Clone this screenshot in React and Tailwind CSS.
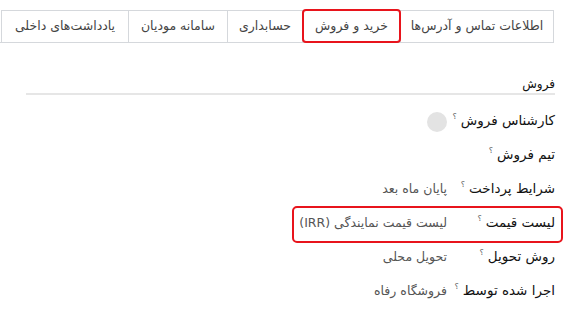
import React from "react";

const tabs = [
  { label: "اطلاعات تماس و آدرس‌ها", w: "w-[154px]" },
  { label: "خرید و فروش", w: "w-[98px]", active: true },
  { label: "حسابداری", w: "w-[75px]" },
  { label: "سامانه مودیان", w: "w-[99px]" },
  { label: "یادداشت‌های داخلی", w: "w-[127px]" },
];

const rows = [
  { label: "کارشناس فروش", avatar: true },
  { label: "تیم فروش" },
  { label: "شرایط پرداخت", value: "پایان ماه بعد" },
  { label: "لیست قیمت", value: "لیست قیمت نمایندگی (IRR)", boxed: true },
  { label: "روش تحویل", value: "تحویل محلی" },
  { label: "اجرا شده توسط", value: "فروشگاه رفاه" },
];

export default function App() {
  return (
    <div
      dir="rtl"
      className="w-[578px] h-[326px] bg-white overflow-hidden"
      style={{ fontFamily: '"DejaVu Sans", "Noto Sans", sans-serif' }}
    >
      <div className="pt-[10px] pr-[24px] flex">
        <div className="flex h-[33px] border-b border-[#d5d8dc] w-full">
          {tabs.map((t, i) => (
            <div
              key={i}
              className={`${t.w} shrink-0 relative h-full flex items-center justify-center text-[12.5px] text-[#444] border-t border-l border-[#d5d8dc] ${i === 0 ? "border-r" : ""} ${t.active ? "bg-white" : ""}`}
            >
              {t.label}
              {t.active && (
                <div className="absolute -top-[2px] -bottom-[1px] -left-[1px] -right-[1px] border-2 border-[#e8141c] rounded-[4px]" />
              )}
            </div>
          ))}
          <div className="flex-1" />
        </div>
      </div>

      <div className="pr-[23px] pl-[26px] pt-[35px]">
        <div className="h-[12px] flex items-end text-[12px] text-[#111] leading-none">
          فروش
        </div>
        <div className="mt-[3px] border-b-2 border-[#e6e6e6]" />
        <div className="mt-[9px] flex flex-col">
          {rows.map((r, i) => (
            <div key={i} className="relative h-[34px] flex items-center">
              <div className="w-[100px] shrink-0 text-[13.5px] text-[#111] whitespace-nowrap leading-none">
                <span>{r.label}</span>
                <span className="relative -top-[6px] text-[8px] text-[#666] mr-[4px]">؟</span>
              </div>
              <div className="mr-[8px] flex items-center text-[12.5px] text-[#555] whitespace-nowrap">
                {r.avatar && <div className="w-[20px] h-[20px] rounded-full bg-[#e3e3e3] mt-[2px]" />}
                {r.value}
              </div>
              {r.boxed && (
                <div className="absolute top-0 -bottom-[3px] -right-[8px] left-[266px] border-2 border-[#e8141c] rounded-[5px]" />
              )}
            </div>
          ))}
        </div>
      </div>
    </div>
  );
}
